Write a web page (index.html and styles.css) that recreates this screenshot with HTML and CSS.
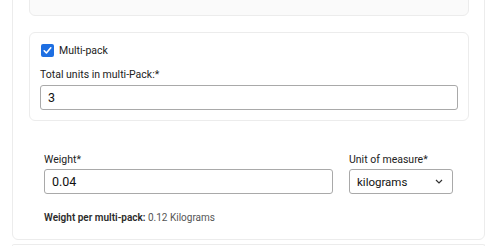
FILE: index.html
```html
<!DOCTYPE html>
<html>
<head>
<meta charset="utf-8">
<link rel="stylesheet" href="styles.css">
</head>
<body>
<div class="page">
  <div class="card">
    <div class="panel panel-top"></div>
    <div class="panel panel-pack">
      <label class="check">
        <span class="box"><svg width="13" height="13" viewBox="0 0 13 13"><path d="M3.2 6.8 L5.4 9 L9.8 3.8" fill="none" stroke="#fff" stroke-width="1.6" stroke-linecap="round" stroke-linejoin="round"/></svg></span>
        <span>Multi-pack</span>
      </label>
      <div class="field">
        <span class="label">Total units in multi-Pack:*</span>
        <div class="input">3</div>
      </div>
    </div>
    <div class="weight">
      <div class="row">
        <div class="field grow">
          <span class="label">Weight*</span>
          <div class="input">0.04</div>
        </div>
        <div class="field unit">
          <span class="label">Unit of measure*</span>
          <div class="input select"><span>kilograms</span><svg width="8" height="5" viewBox="0 0 8 5"><path d="M1 1 L4 4 L7 1" fill="none" stroke="#333" stroke-width="1.2"/></svg></div>
        </div>
      </div>
      <p class="summary"><b>Weight per multi-pack:</b> 0.12 Kilograms</p>
    </div>
  </div>
  <div class="card card-next"></div>
</div>
</body>
</html>
```
FILE: styles.css
```css
html, body { margin: 0; padding: 0; background: #fff; }
body { font-family: Roboto, "Liberation Sans", Arial, sans-serif; color: #222; overflow: hidden; height: 246px; }
.page { margin-top: -30px; padding: 0 2px 0 12px; }
.card { border: 1px solid #ececec; border-radius: 6px; background: #fff; padding: 16px 15px 0 16px; }
.panel { border: 1px solid #ececec; border-radius: 6px; }
.panel-top { height: 27px; background: #fafafa; }
.panel-pack { margin-top: 16px; padding: 10px; }
.check { display: flex; align-items: center; gap: 5px; font-size: 10.5px; padding-left: 1px; height: 14px; }
.box { width: 13px; height: 13px; border-radius: 2px; background: #1e6fe2; display: block; }
.box svg { display: block; }
.field { display: flex; flex-direction: column; }
.panel-pack .field { margin-top: 11px; }
.label { font-size: 10.5px; line-height: 14px; margin-bottom: 3px; }
.weight .label { margin-bottom: 2px; }
.input { height: 25px; box-sizing: border-box; border: 1px solid #a9a9a9; border-radius: 3px; font-size: 12.5px; display: flex; align-items: center; padding: 0 7px; color: #111; }
.weight { padding: 32px 16px 0 15px; }
.row { display: flex; gap: 16px; }
.grow { flex: 1; }
.unit { width: 104px; }
.select { justify-content: space-between; padding: 0 9px 0 7px; font-size: 11.5px; }
.summary { margin: 17px 0 0; font-size: 10px; line-height: 14px; padding-bottom: 14px; color: #555; }
.summary b { color: #2b2b2b; font-weight: 600; }
.card-next { margin-top: 4px; height: 1px; padding: 0; border-bottom: 0; border-radius: 6px 6px 0 0; }
```
